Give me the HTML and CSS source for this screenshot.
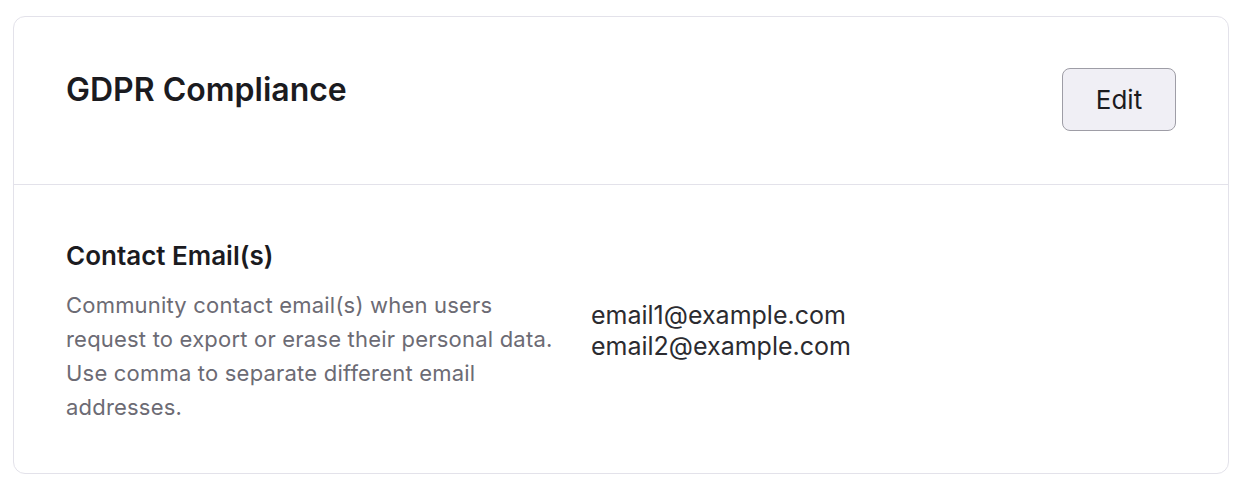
FILE: index.html
```html
<!DOCTYPE html>
<html>
<head>
<meta charset="utf-8">
<link rel="stylesheet" href="styles.css">
</head>
<body>
<div class="page">
  <section class="card">
    <header class="card-header">
      <h1 class="card-title">GDPR Compliance</h1>
      <button class="btn">Edit</button>
    </header>
    <div class="card-body">
      <div class="field-info">
        <h2 class="field-label">Contact Email(s)</h2>
        <p class="field-desc">Community contact email(s) when users request to export or erase their personal data. Use comma to separate different email addresses.</p>
      </div>
      <div class="field-value">
        <div>email1@example.com</div>
        <div>email2@example.com</div>
      </div>
    </div>
  </section>
</div>
</body>
</html>
```

FILE: styles.css
```css
* { box-sizing: border-box; }
html, body { margin: 0; padding: 0; background: #fff; }
body { font-family: Inter, "Noto Sans", sans-serif; color: #1b1b1f; }
.page { padding: 16px 15px 15px 13px; }
.card {
  border: 1px solid #e3e2ea;
  border-radius: 12px;
  background: #fff;
}
.card-header {
  display: flex;
  justify-content: space-between;
  align-items: flex-start;
  padding: 51px 52px 53px 52px;
  border-bottom: 1px solid #e3e2ea;
}
.card-title {
  margin: 0;
  font-size: 32px;
  font-weight: 600;
  line-height: 44px;
  color: #1b1b1f;
}
.btn {
  font-family: Inter, "Noto Sans", sans-serif;
  font-size: 26px;
  color: #1b1b1f;
  background: #f0eff5;
  border: 1px solid #9e9da6;
  border-radius: 8px;
  width: 114px;
  height: 63px;
  padding: 0;
}
.card-body {
  display: grid;
  grid-template-columns: 500px 1fr;
  column-gap: 25px;
  padding: 54px 52px 49px 52px;
}
.field-label {
  margin: 0 0 15px 0;
  font-size: 26px;
  font-weight: 600;
  line-height: 34px;
  color: #1b1b1f;
}
.field-desc {
  margin: 0;
  font-size: 22px;
  letter-spacing: 0.2px;
  line-height: 34px;
  color: #6c6b74;
}
.field-value {
  padding-top: 61px;
  font-size: 25px;
  line-height: 31px;
  color: #2b2b30;
}
```
